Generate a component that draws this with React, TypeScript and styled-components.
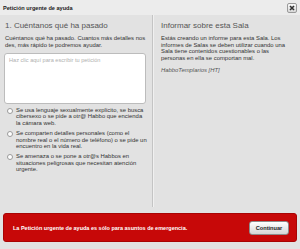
import React from 'react';
import styled, {createGlobalStyle} from 'styled-components';

const Global = createGlobalStyle`
    html, body {
        margin: 0;
        padding: 0;
        background: #e2e2e2;
    }
    body {
        font-family: "Liberation Sans", Arial, sans-serif;
        -webkit-font-smoothing: antialiased;
    }
`;

const Window = styled.div`
    width: 300px;
    height: 249px;
    background: #e2e2e2;
    display: flex;
    flex-direction: column;
    overflow: hidden;
`;

const TitleBar = styled.div`
    height: 15px;
    background: #ececec;
    display: flex;
    align-items: center;
    justify-content: space-between;
    padding: 1px 3px 0 3px;
    box-sizing: border-box;
`;

const WindowTitle = styled.span`
    font-size: 5.6px;
    font-weight: bold;
    color: #222;
`;

const CloseButton = styled.button`
    width: 10px;
    height: 10px;
    padding: 0;
    border: 1px solid #9a9a9a;
    border-radius: 2px;
    background: linear-gradient(#fafafa, #d8d8d8);
    display: flex;
    align-items: center;
    justify-content: center;
    box-sizing: border-box;
`;

const Columns = styled.div`
    display: flex;
    height: 192px;
`;

const Column = styled.section<{ $side?: boolean }>`
    box-sizing: border-box;
    width: ${p => p.$side ? '148px' : '152px'};
    padding: ${p => p.$side ? '5px 8px 0 7px' : '5px 5px 0 4px'};
    border-left: ${p => p.$side ? '1px solid #c4c4c4' : 'none'};
    box-shadow: ${p => p.$side ? 'inset 1px 0 0 #f0f0f0' : 'none'};
`;

const Heading = styled.h2`
    margin: 0 0 3px 1px;
    font-size: 8px;
    font-weight: normal;
    color: #555;
    line-height: 12px;
`;

const Text = styled.p<{ $italic?: boolean }>`
    margin: 0 0 6px 1px;
    font-size: 5.9px;
    line-height: 6.5px;
    font-style: ${p => p.$italic ? 'italic' : 'normal'};
    color: ${p => p.$italic ? '#555' : '#333'};
`;

const Message = styled.textarea`
    display: block;
    box-sizing: border-box;
    width: 142px;
    height: 51px;
    margin: -1px 0 3px 0;
    padding: 3px 4px;
    background: #fff;
    border: 1px solid #bcbcbc;
    border-radius: 3px;
    resize: none;
    font-family: inherit;
    font-size: 5.6px;
    color: #333;
    &::placeholder {
        color: #b0b0b0;
    }
`;

const Option = styled.label`
    display: flex;
    align-items: flex-start;
    gap: 3px;
    margin: 0 0 4px 3px;
    font-size: 5.9px;
    line-height: 6.4px;
    color: #333;
`;

const Radio = styled.span`
    flex: none;
    width: 6px;
    height: 6px;
    margin-top: 0.5px;
    border: 1px solid #9a9a9a;
    border-radius: 50%;
    background: #fff;
    box-sizing: border-box;
`;

const Footer = styled.div`
    padding: 6px 3px 7px 3px;
`;

const Alert = styled.div`
    height: 29px;
    box-sizing: border-box;
    background: #c70808;
    border: 1px solid #a80404;
    border-radius: 3px;
    display: flex;
    align-items: center;
    justify-content: space-between;
    padding: 0 7px 0 9px;
`;

const AlertText = styled.strong`
    font-size: 5.5px;
    color: #fff;
`;

const Button = styled.button`
    height: 14px;
    width: 40px;
    padding: 0;
    border: 1px solid #8c8c8c;
    border-radius: 3px;
    background: linear-gradient(#ffffff, #d6d6d6);
    font-family: inherit;
    font-size: 5.6px;
    font-weight: bold;
    color: #222;
`;

const options = [
    'Se usa lenguaje sexualmente explícito, se busca cibersexo o se pide a otr@ Habbo que encienda la cámara web.',
    'Se comparten detalles personales (como el nombre real o el número de teléfono) o se pide un encuentro en la vida real.',
    'Se amenaza o se pone a otr@s Habbos en situaciones peligrosas que necesitan atención urgente.',
];

function App() {
    return (
        <>
            <Global/>
            <Window>
                <TitleBar>
                    <WindowTitle>Petición urgente de ayuda</WindowTitle>
                    <CloseButton aria-label="Cerrar">
                        <svg width="6" height="6" viewBox="0 0 6 6">
                            <path d="M1 1L5 5M5 1L1 5" stroke="#333" strokeWidth="1.6"/>
                        </svg>
                    </CloseButton>
                </TitleBar>
                <Columns>
                    <Column>
                        <Heading>1. Cuéntanos qué ha pasado</Heading>
                        <Text>Cuéntanos qué ha pasado. Cuantos más detalles nos des, más rápido te podremos ayudar.</Text>
                        <Message placeholder="Haz clic aquí para escribir tu petición"/>
                        {options.map(o => (
                            <Option key={o}>
                                <Radio/>
                                <span>{o}</span>
                            </Option>
                        ))}
                    </Column>
                    <Column $side>
                        <Heading>Informar sobre esta Sala</Heading>
                        <Text>Estás creando un informe para esta Sala. Los informes de Salas se deben utilizar cuando una Sala tiene contenidos cuestionables o las personas en ella se comportan mal.</Text>
                        <Text $italic>HabboTemplarios [HT]</Text>
                    </Column>
                </Columns>
                <Footer>
                    <Alert>
                        <AlertText>La Petición urgente de ayuda es sólo para asuntos de emergencia.</AlertText>
                        <Button>Continuar</Button>
                    </Alert>
                </Footer>
            </Window>
        </>
    );
}

export default App;
